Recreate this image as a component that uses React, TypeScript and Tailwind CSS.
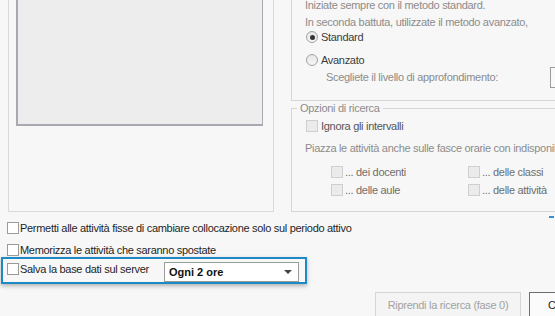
import React from "react";

function Check({ disabled }: { disabled?: boolean }) {
  return (
    <span
      className={
        disabled
          ? "block w-3 h-3 shrink-0 border border-[#cfcfcf] bg-[#ebebeb]"
          : "block w-3 h-3 shrink-0 border border-[#9a9a9a] bg-white"
      }
    />
  );
}

function Radio({ checked }: { checked?: boolean }) {
  return (
    <span className="flex items-center justify-center w-3 h-3 shrink-0 rounded-full border border-[#a2a2a2] bg-gradient-to-b from-[#e6e6e6] to-[#f6f6f6]">
      {checked && <span className="block w-[5px] h-[5px] rounded-full bg-[#333]" />}
    </span>
  );
}

export default function App() {
  return (
    <div
      className="relative w-[555px] h-[316px] overflow-hidden bg-[#f7f7f7] text-[11px] tracking-[-0.3px] text-[#1f1f1f]"
      style={{ fontFamily: '"Liberation Sans", Arial, sans-serif' }}
    >
      {/* top part: list group on the left, option groups on the right */}
      <div className="flex h-[212px]">
        <div className="shrink-0 ml-2 w-[266px] h-[212px] border-x border-b border-[#dadada]">
          <div className="ml-[7px] w-[247px] h-[126px] bg-[#ededed] border-l-2 border-r border-b-2 border-[#a9a9b1]" />
        </div>

        <div className="shrink-0 ml-[17px] w-[290px] flex flex-col">
          <div className="h-[101px] border-l border-b border-[#d6d6d6]">
            <div className="-mt-[3px] pl-[13px] h-4 leading-4 text-[#8c8c8c]">
              Iniziate sempre con il metodo standard.
            </div>
            <div className="mt-px pl-[13px] h-4 leading-4 text-[#8c8c8c]">
              In seconda battuta, utilizzate il metodo avanzato,
            </div>
            <div className="-mt-px pl-[14px] h-4 flex items-center gap-[3px] text-[#3c3c3c]">
              <Radio checked />
              <span>Standard</span>
            </div>
            <div className="mt-[7px] pl-[14px] h-4 flex items-center gap-[3px] text-[#3c3c3c]">
              <Radio />
              <span>Avanzato</span>
            </div>
            <div className="-mt-px pl-[34px] flex items-start">
              <span className="shrink-0 w-[224px] mt-[2px] h-4 leading-4 text-[#8c8c8c]">
                Scegliete il livello di approfondimento:
              </span>
              <span className="shrink-0 block w-[40px] h-[21px] border border-[#9c9c9c] bg-[#f9f9f9]" />
            </div>
          </div>

          <fieldset className="h-[111px] border-l border-b border-t border-[#d6d6d6]">
            <legend className="ml-[5px] px-[3px] leading-[14px] text-[#8c8c8c]">
              Opzioni di ricerca
            </legend>
            <div className="mt-[3px] pl-[14px] h-4 flex items-center gap-[3px] text-[#555]">
              <Check disabled />
              <span>Ignora gli intervalli</span>
            </div>
            <div className="mt-[6px] pl-[13px] h-4 leading-4 whitespace-nowrap text-[#8c8c8c]">
              Piazza le attività anche sulle fasce orarie con indisponibilità
            </div>
            <div className="mt-[8px] pl-[39px] grid grid-cols-[137px_137px] gap-y-[2px] text-[#6e6e6e]">
              <div className="h-4 flex items-center gap-[2px]">
                <Check disabled />
                <span>... dei docenti</span>
              </div>
              <div className="h-4 flex items-center gap-[2px]">
                <Check disabled />
                <span>... delle classi</span>
              </div>
              <div className="h-4 flex items-center gap-[2px]">
                <Check disabled />
                <span>... delle aule</span>
              </div>
              <div className="h-4 flex items-center gap-[2px]">
                <Check disabled />
                <span>... delle attività</span>
              </div>
            </div>
          </fieldset>
        </div>
      </div>

      {/* bottom options */}
      <div className="mt-[8px] pl-[7px] h-4 flex items-center gap-px">
        <Check />
        <span>Permetti alle attività fisse di cambiare collocazione solo sul periodo attivo</span>
      </div>
      <div className="mt-[6px] pl-[7px] h-4 flex items-center gap-px">
        <Check />
        <span>Memorizza le attività che saranno spostate</span>
      </div>

      <div className="-mt-px ml-px w-[306px] h-[27px] flex items-start border-2 border-[#1d8ac6] shadow-[0_2px_4px_rgba(0,0,0,0.28)]">
        <div className="ml-[4px] mt-[4px] flex items-center gap-px">
          <Check />
          <span className="w-[144px] leading-3">Salva la base dati sul server</span>
        </div>
        <div className="mt-[3px] w-[135px] h-[20px] flex items-center justify-between pl-[4px] pr-[6px] bg-white border border-[#9a9a9a]">
          <span className="font-bold text-[#111] tracking-normal">Ogni 2 ore</span>
          <svg width="8" height="4" viewBox="0 0 8 4">
            <path d="M0 0 H8 L4 4 Z" fill="#444" />
          </svg>
        </div>
      </div>

      <div className="mt-[8px] ml-[375px] flex gap-[8px]">
        <div className="shrink-0 w-[146px] h-[26px] pt-[4px] text-center whitespace-nowrap bg-[#f4f4f4] border border-[#d6d6d6] text-[#a2a2a2]">
          Riprendi la ricerca (fase 0)
        </div>
        <div className="shrink-0 w-[80px] h-[26px] pt-[4px] pl-[18px] whitespace-nowrap bg-[#fbfbfb] border border-[#6e6e6e] text-[#222]">
          Chiudi
        </div>
      </div>

      <span className="absolute left-[549px] top-[216px] w-[5px] h-[2px] bg-[#3a8fd0]" />
    </div>
  );
}
